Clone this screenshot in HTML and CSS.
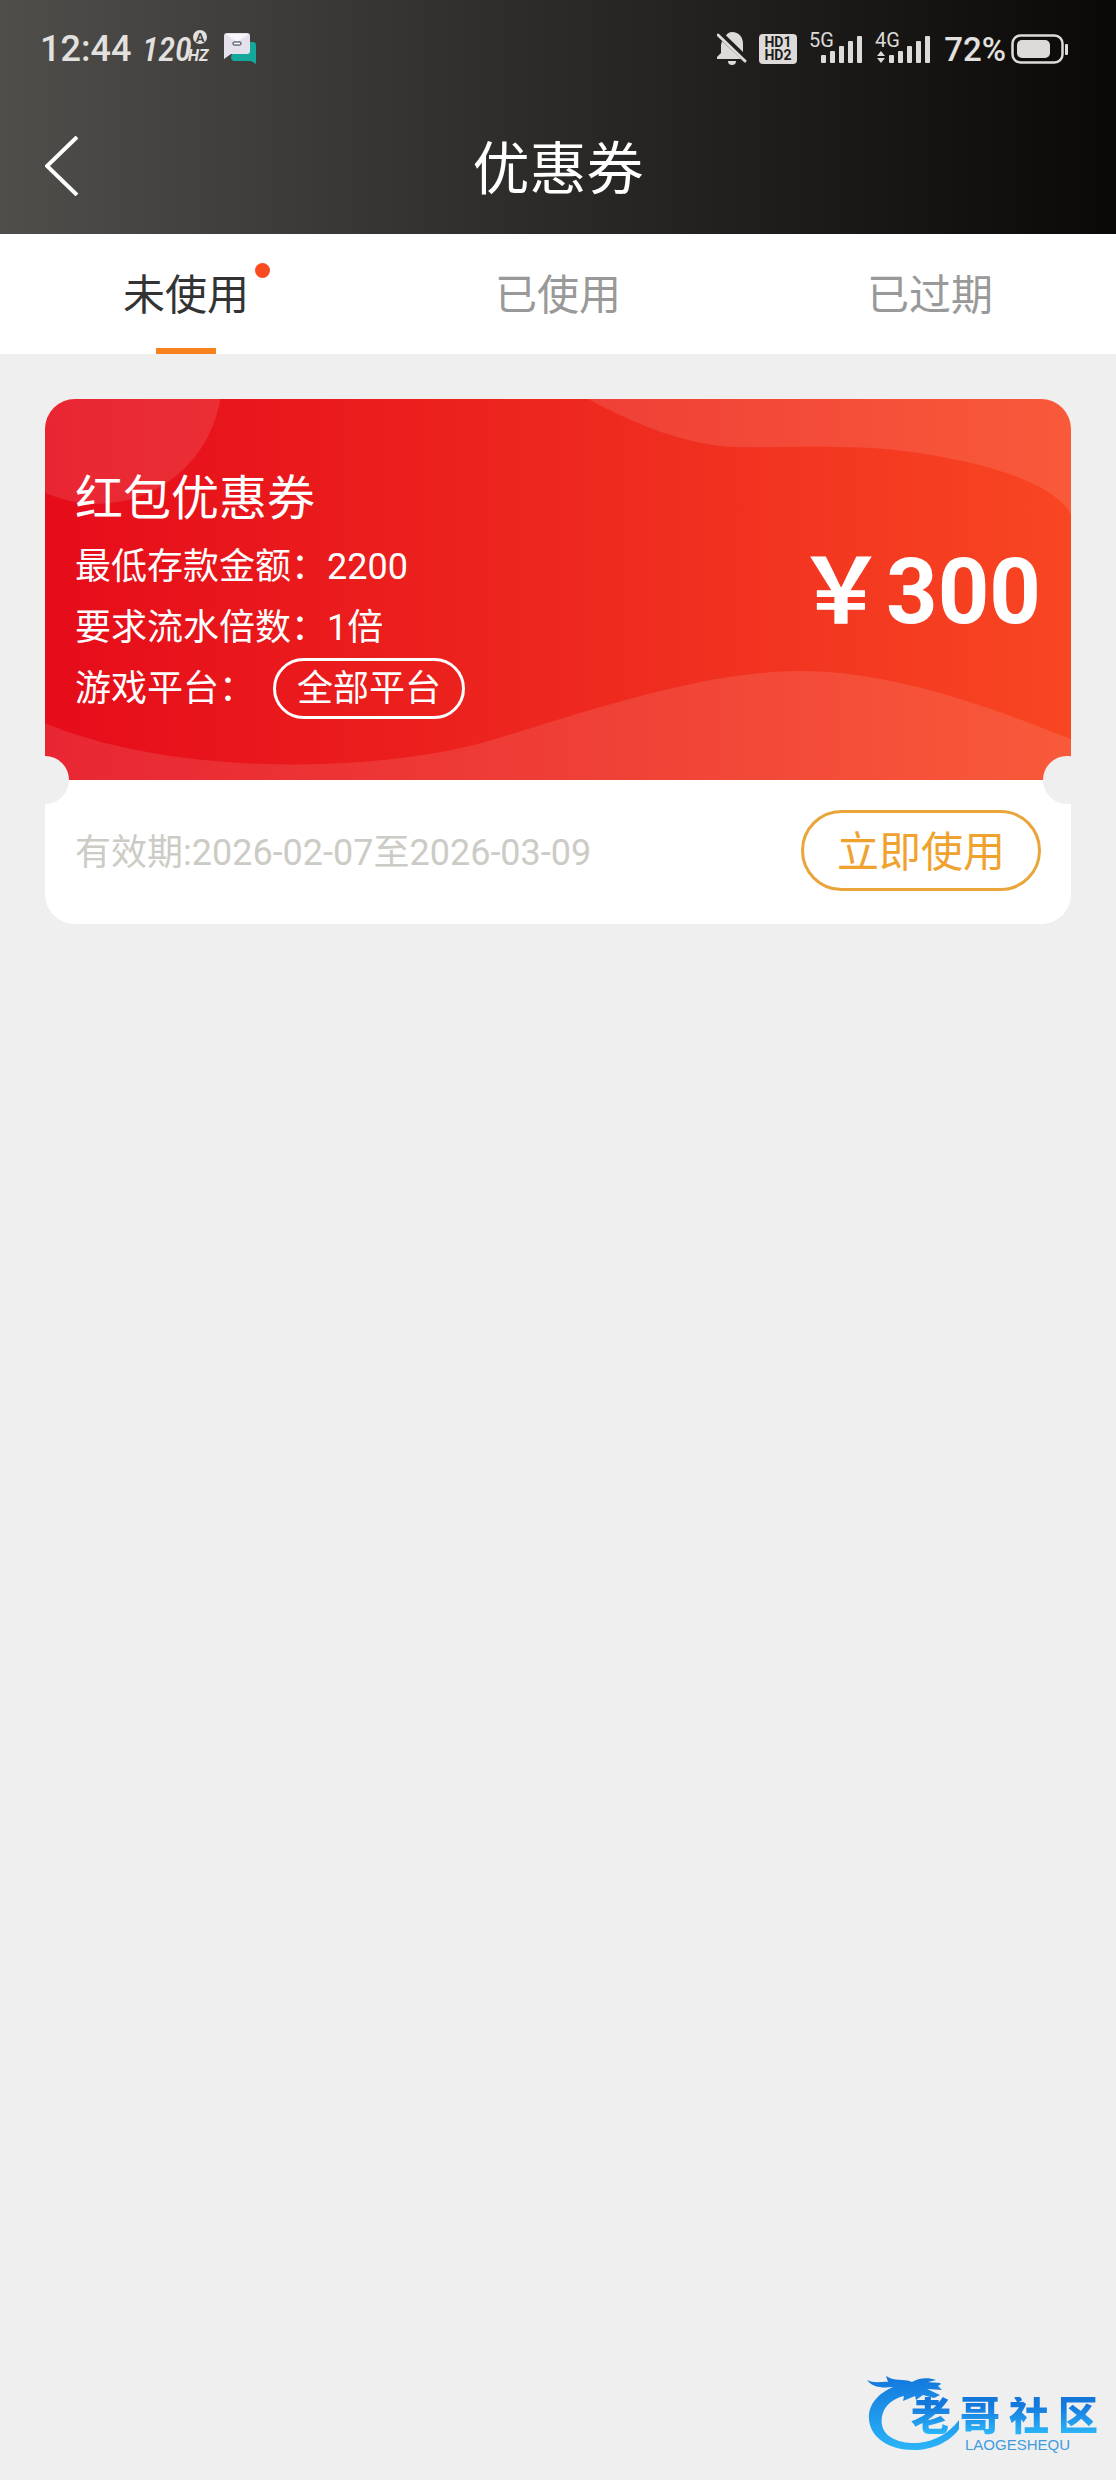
FILE: index.html
```html
<!DOCTYPE html>
<html lang="zh-CN">
<head>
<meta charset="utf-8">
<meta name="viewport" content="width=device-width, initial-scale=1">
<title>优惠券</title>
<link rel="stylesheet" href="styles.css">
</head>
<body>
<header class="top">
  <div class="status">
    <div class="status-group">
      <span class="clock">12:44</span>
      <svg width="70" height="60" viewBox="0 -10 70 60" aria-hidden="true" fill="#e2e1df">
        <text class="rate-num" x="0" y="32">120</text>
        <text class="rate-unit" x="46" y="32">HZ</text>
        <circle cx="58" cy="8" r="7"/>
        <text class="rate-auto" x="58" y="13" text-anchor="middle">A</text>
      </svg>
      <svg width="34" height="32" viewBox="0 0 34 32" aria-hidden="true">
        <path d="M13 9h17a3 3 0 0 1 3 3v19l-5-3H11a4 4 0 0 1-3-4z" fill="#14a89c"/>
        <path d="M4 0h20a3 3 0 0 1 3 3v15a3 3 0 0 1-3 3H8l-7 5V3a3 3 0 0 1 3-3z" fill="#e4e0ec"/>
        <path d="M2 1l12 8L26 1z" fill="#f7f5fa"/>
        <rect x="10" y="9" width="8" height="3" rx="1" fill="#fff" stroke="#27313a"/>
      </svg>
    </div>
    <div class="status-group status-right">
      <svg width="30" height="34" viewBox="0 0 30 34" aria-hidden="true" fill="#dcdbd9">
        <path d="M9 3.500Q11 0 15 0C22 0 26 5 26 12v8z"/>
        <path d="M5 9L24 27H0v-2l4-4V13z"/>
        <path d="M1 3L28 29" stroke="#dcdbd9" stroke-width="3" stroke-linecap="round"/>
        <path d="M11 29h8a4 4 0 0 1-8 0z"/>
      </svg>
      <svg width="38" height="30" viewBox="0 0 38 30" aria-hidden="true">
        <rect width="38" height="30" rx="4" fill="#dcdbd9"/>
        <text class="hd" x="19" y="13" text-anchor="middle">HD1</text>
        <text class="hd" x="19" y="26" text-anchor="middle">HD2</text>
      </svg>
      <svg width="54" height="52" viewBox="0 -10 54 52" aria-hidden="true" fill="#dcdbd9">
        <text class="net" x="0" y="14">5G</text>
        <rect x="12" y="22" width="5" height="8" rx="1"/><rect x="21" y="18" width="5" height="12" rx="1"/><rect x="30" y="13" width="5" height="17" rx="1"/><rect x="39" y="8" width="5" height="22" rx="1"/><rect x="48" y="3" width="5" height="27" rx="1"/>
      </svg>
      <svg width="55" height="52" viewBox="0 -10 55 52" aria-hidden="true" fill="#dcdbd9">
        <text class="net" x="0" y="14">4G</text>
        <path d="M2 23l4-5 4 5zM2 25l4 5 4-5z"/>
        <rect x="14" y="22" width="5" height="8" rx="1"/><rect x="23" y="18" width="5" height="12" rx="1"/><rect x="32" y="13" width="5" height="17" rx="1"/><rect x="41" y="8" width="5" height="22" rx="1"/><rect x="50" y="3" width="5" height="27" rx="1"/>
      </svg>
      <span class="battery">
        <span class="percent">72%</span>
        <svg width="58" height="30" viewBox="0 0 58 30" aria-hidden="true">
          <rect x="1.500" y="1.500" width="50" height="27" rx="8" fill="none" stroke="#dcdbd9" stroke-width="2.500"/>
          <rect x="6" y="6" width="33" height="18" rx="5" fill="#dcdbd9"/>
          <rect x="54" y="10" width="3" height="11" rx="1" fill="#dcdbd9"/>
        </svg>
      </span>
    </div>
  </div>
  <div class="nav">
    <button class="back" type="button" aria-label="返回">
      <svg width="34" height="60" viewBox="0 0 34 60" aria-hidden="true"><path d="M32 1L2 30l30 29" fill="none" stroke="#fff" stroke-width="4"/></svg>
    </button>
    <h1 class="title">优惠券</h1>
  </div>
</header>

<div class="tabs" role="tablist">
  <button class="tab tab-active" type="button" role="tab" aria-selected="true"><span class="tab-label">未使用<i class="dot"></i></span></button>
  <button class="tab" type="button" role="tab" aria-selected="false"><span class="tab-label">已使用</span></button>
  <button class="tab" type="button" role="tab" aria-selected="false"><span class="tab-label">已过期</span></button>
</div>

<main class="list">
  <article class="coupon">
    <div class="banner">
      <svg class="waves" viewBox="0 0 1026 381" preserveAspectRatio="none" aria-hidden="true">
        <g fill="#fff" fill-opacity=".11">
          <circle cx="52" cy="-20" r="125"/>
          <path d="M543 0C590 25 640 46 691 48C750 49 800 45 859 52C930 61 1010 82 1026 116V0z"/>
          <path d="M0 324C120 375 320 376 440 343C520 320 650 272 756 272C850 272 950 310 1026 340V381H0z"/>
        </g>
      </svg>
      <div class="info">
        <h2 class="name">红包优惠券</h2>
        <p class="line">最低存款金额：2200</p>
        <p class="line">要求流水倍数：1倍</p>
        <p class="line">游戏平台：<span class="pill">全部平台</span></p>
      </div>
      <p class="amount">￥300</p>
    </div>
    <div class="foot">
      <p class="valid">有效期:2026-02-07至2026-03-09</p>
      <button class="use" type="button">立即使用</button>
    </div>
  </article>
</main>

<footer class="brand">
  <svg class="dragon" width="96" height="80" viewBox="0 0 96 80" aria-hidden="true">
    <defs><linearGradient id="sea" x1="0" y1="0" x2="0" y2="1"><stop offset="0" stop-color="#1377dc"/><stop offset="1" stop-color="#2bb4f8"/></linearGradient></defs>
    <path fill="url(#sea)" d="M1 5C9 9 17 6 22 7L20 1C29 7 37 3 46 7C52 3 62 2 70 5L62 7C68 8 75 7 75 9L72 11L76 15L61 14L74 20L68 23L57 20L50 25L49 21L37 26L38 21C22 25 14 36 16 50C18 62 33 69 52 68C70 66 83 58 93 45V54C84 67 66 75 48 75C22 75 4 62 3 44C2 29 13 18 27 12C17 13 7 13 1 5z"/>
  </svg>
  <div class="brand-text">
    <p class="brand-name"><span>老</span><span>哥</span><span>社</span><span>区</span></p>
    <p class="brand-sub">LAOGESHEQU</p>
  </div>
</footer>
</body>
</html>
```
FILE: styles.css
```css
* { box-sizing: border-box; }

body {
  display: flex;
  flex-direction: column;
  min-height: 100vh;
  margin: 0;
  background: #efefef;
  font-family: Roboto, "Noto Sans CJK SC", sans-serif;
  font-size: 36px;
}

h1, h2, p { margin: 0; font-weight: 400; }

button {
  padding: 0;
  border: 0;
  background: none;
  font: inherit;
  cursor: pointer;
}

svg { display: block; flex: none; }

/* Header */
.top {
  height: 234px;
  background: linear-gradient(90deg, #4f4e4b, #2e2d2b 45%, #0a0907);
  color: #fff;
}

.status {
  display: flex;
  justify-content: space-between;
  align-items: center;
  height: 98px;
  padding: 0 47px 0 40px;
  color: #e2e1df;
}

.status-group { display: flex; align-items: center; gap: 11px; }
.status-right { gap: 12px; }
.clock { font-weight: 500; }
.rate-num { font: italic 500 34px "Liberation Sans Narrow", "Roboto Condensed", Roboto, sans-serif; }
.rate-unit { font: italic 700 16px Roboto, sans-serif; }
.rate-auto { font: 700 13px Roboto, sans-serif; fill: #42413f; }
.hd { font: 700 14px Roboto, sans-serif; fill: #1c1b1a; }
.net { font: 20px Roboto, sans-serif; }
.battery { display: flex; align-items: center; gap: 5px; padding-left: 2px; }
.percent { font-size: 33px; font-weight: 500; }

.nav {
  display: grid;
  grid-template-columns: 100px 1fr 100px;
  align-items: center;
  height: 136px;
}

.back { height: 136px; padding: 0 0 0 45px; }
.title { padding-top: 8px; font-size: 57px; line-height: 128px; text-align: center; }

/* Tabs */
.tabs { display: flex; height: 120px; background: #fff; }

.tab {
  position: relative;
  flex: 1;
  padding-top: 4px;
  color: #999;
  font-size: 42px;
  line-height: 116px;
}

.tab-active { color: #333; }

.tab-active::after {
  content: "";
  position: absolute;
  bottom: 0;
  left: 50%;
  width: 60px;
  height: 6px;
  margin-left: -30px;
  background: #fa821e;
}

.tab-label { position: relative; display: inline-block; }

.dot {
  position: absolute;
  top: 25px;
  right: -21px;
  width: 15px;
  height: 15px;
  border-radius: 50%;
  background: #fa4a20;
}

/* Coupon */
.list { padding: 45px; }

.coupon {
  position: relative;
  overflow: hidden;
  border-radius: 30px;
  background: #fff;
}

.banner {
  position: relative;
  display: flex;
  justify-content: space-between;
  align-items: center;
  padding: 70px 30px 60px;
  background: linear-gradient(90deg, #e60c1a, #ee2a1f 55%, #f84622);
  color: #fff;
}

.banner::before,
.banner::after {
  content: "";
  position: absolute;
  z-index: 1;
  bottom: -24px;
  width: 48px;
  height: 48px;
  border-radius: 50%;
  background: #efefef;
}

.banner::before { left: -24px; }
.banner::after { right: -20px; }

.waves { position: absolute; inset: 0; width: 100%; height: 100%; }
.info, .amount { position: relative; }
.name { margin-bottom: 8px; font-size: 48px; line-height: 60px; }
.line { display: flex; align-items: center; height: 61px; line-height: 61px; }

.pill {
  height: 61px;
  margin: -2px 0 0 18px;
  padding: 0 21px;
  border: 3px solid #fff;
  border-radius: 31px;
  line-height: 57px;
}

.amount { padding-bottom: 4px; font-size: 90px; font-weight: 700; line-height: 100px; }

.foot {
  display: flex;
  justify-content: space-between;
  align-items: center;
  padding: 30px 30px 33px;
}

.valid { padding-bottom: 4px; color: #cccbc5; }

.use {
  width: 240px;
  height: 81px;
  padding-bottom: 4px;
  border: 3px solid #e9a53a;
  border-radius: 41px;
  color: #f0a22e;
  font-size: 42px;
}

/* Brand mark */
.brand {
  position: relative;
  align-self: flex-end;
  margin-top: auto;
  padding: 22px 18px 28px 45px;
}

.dragon { position: absolute; top: 0; left: 0; }
.brand-text { position: relative; }

.brand-name {
  display: flex;
  gap: 9px;
  background: linear-gradient(#1377dc 20%, #2bb4f8 90%);
  background-clip: text;
  -webkit-background-clip: text;
  color: transparent;
  font-size: 40px;
  font-weight: 900;
  line-height: 40px;
}

.brand-sub {
  padding-left: 54px;
  color: #3d9ce0;
  font-family: "Liberation Sans", sans-serif;
  font-size: 15px;
  line-height: 15px;
}
```
